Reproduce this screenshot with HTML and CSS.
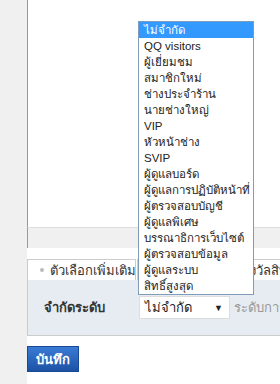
FILE: index.html
```html
<!DOCTYPE html>
<html lang="th">
<head>
    <meta charset="UTF-8">
    <title>ตั้งค่า</title>
    <link rel="stylesheet" href="styles.css">
</head>
<body>
    <div class="side"></div>
    <div class="main">
        <div class="top"></div>
        <div class="bar"></div>
        <div class="tabs">
            <div class="tab active"><span class="dot"></span>ตัวเลือกเพิ่มเติม</div>
            <div class="tab"><span class="dot"></span>การตั้งค่าแต้มรางวัลสิทธิ์</div>
        </div>
        <div class="panel">
            <div class="label">จำกัดระดับ</div>
            <div class="select">ไม่จำกัด<span class="arrow">▼</span></div>
            <div class="hint">ระดับการเข้าถึง</div>
        </div>
        <button class="save">บันทึก</button>
    </div>

    <ul class="dropdown">
        <li class="on">ไม่จำกัด</li>
        <li>QQ visitors</li>
        <li>ผู้เยี่ยมชม</li>
        <li>สมาชิกใหม่</li>
        <li>ช่างประจำร้าน</li>
        <li>นายช่างใหญ่</li>
        <li>VIP</li>
        <li>หัวหน้าช่าง</li>
        <li>SVIP</li>
        <li>ผู้ดูแลบอร์ด</li>
        <li>ผู้ดูแลการปฏิบัติหน้าที่</li>
        <li>ผู้ตรวจสอบบัญชี</li>
        <li>ผู้ดูแลพิเศษ</li>
        <li>บรรณาธิการเว็บไซต์</li>
        <li>ผู้ตรวจสอบข้อมูล</li>
        <li>ผู้ดูแลระบบ</li>
        <li>สิทธิ์สูงสุด</li>
    </ul>
</body>
</html>
```

FILE: styles.css
```css
body {
    margin: 0;
    display: flex;
    height: 384px;
    overflow: hidden;
    font-family: Tahoma, "Liberation Sans", sans-serif;
    font-size: 12px;
    color: #333;
    background: #fff;
}
.side {
    width: 27px;
    flex-shrink: 0;
    background-color: #f0f0f0;
}
.main {
    flex-grow: 1;
    overflow: hidden;
}
.top {
    height: 227px;
    border-left: 1px solid #999;
    border-bottom: 1px solid #ddd;
}
.bar {
    height: 20px;
    background-color: #f0f0f0;
    border-left: 1px solid #999;
}
.tabs {
    display: flex;
    margin-top: 11px;
    height: 21px;
    white-space: nowrap;
}
.tab {
    display: flex;
    align-items: center;
    flex-shrink: 0;
    width: 109px;
    height: 21px;
    padding-left: 12px;
    border: 1px solid #ccc;
    border-bottom: none;
    box-sizing: border-box;
    background: #fff;
    font-size: 13px;
}
.tab + .tab {
    width: auto;
    margin-left: 1px;
    padding: 0 8px 0 11px;
}
.dot {
    flex-shrink: 0;
    width: 4px;
    height: 4px;
    border-radius: 50%;
    background: #bbb;
    margin-right: 6px;
}
.panel {
    display: flex;
    align-items: center;
    height: 55px;
    background-color: #e6ecf2;
    border-left: 1px solid #ccc;
    border-bottom: 1px solid #ccc;
    white-space: nowrap;
    overflow: hidden;
}
.label {
    width: 111px;
    flex-shrink: 0;
    padding-left: 16px;
    box-sizing: border-box;
    font-weight: bold;
    font-size: 13px;
}
.select {
    display: flex;
    align-items: center;
    flex-shrink: 0;
    width: 91px;
    height: 23px;
    padding-left: 5px;
    box-sizing: border-box;
    background: #fff;
    border: 1px solid #ddd;
    color: #222;
    font-size: 13px;
}
.arrow {
    margin-left: auto;
    margin-right: 6px;
    font-size: 9px;
}
.hint {
    margin-left: 4px;
    color: #999;
    font-size: 13px;
}
.save {
    margin-top: 10px;
    width: 52px;
    height: 26px;
    padding: 0;
    font-family: inherit;
    font-size: 13px;
    font-weight: bold;
    color: #fff;
    background: linear-gradient(#3a7bd5, #1c52a6);
    border: 1px solid #1a4a96;
}
.dropdown {
    position: absolute;
    left: 138px;
    top: 21px;
    width: 114px;
    margin: 0;
    padding: 0;
    list-style: none;
    background: #fff;
    border: 1px solid #7f9db9;
    color: #222;
    font-size: 11.5px;
}
.dropdown li {
    height: 16px;
    line-height: 16px;
    padding-left: 5px;
    white-space: nowrap;
    overflow: hidden;
}
.dropdown li.on {
    background: #3399ff;
    color: #fff;
}
```
